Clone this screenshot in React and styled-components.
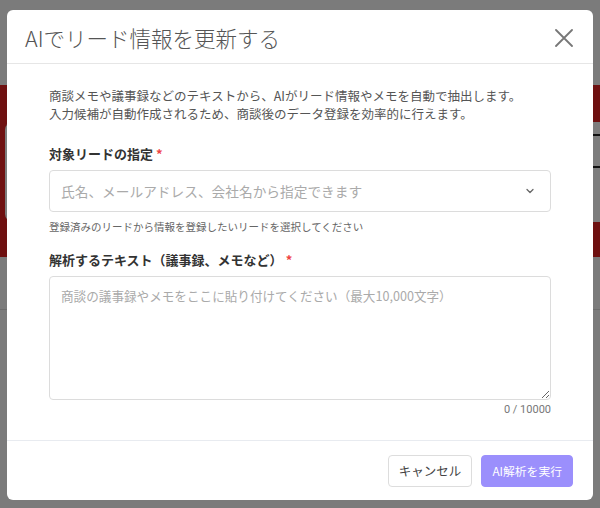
import React from 'react';
import styled, { createGlobalStyle } from 'styled-components';

const GlobalStyle = createGlobalStyle`
  html, body {
    margin: 0;
    padding: 0;
    width: 600px;
    height: 508px;
    overflow: hidden;
    font-family: 'Noto Sans CJK JP', 'Noto Sans', sans-serif;
  }
  * {
    box-sizing: border-box;
  }
`;

const Page = styled.div`
  position: relative;
  width: 600px;
  height: 508px;
  background: #f6f6f6;
  display: flex;
  flex-direction: column;
`;

const PageTop = styled.div`
  height: 85px;
  flex-shrink: 0;
`;

const Hero = styled.div`
  height: 172px;
  flex-shrink: 0;
  background: #dc2121;
  padding: 37px 0 0 5px;
`;

const HeroCard = styled.div`
  height: 100px;
  background: #fafafa;
  border-radius: 8px 0 0 8px;
  display: flex;
  justify-content: flex-end;
  align-items: flex-start;
  padding-top: 12px;
`;

const CardIcon = styled.div`
  width: 12px;
  height: 34px;
  border: 2px solid #222;
  border-right: none;
  border-radius: 4px 0 0 4px;
`;

const Divider = styled.div`
  margin-top: 52px;
  height: 1px;
  background: #d8d8d8;
`;

const Overlay = styled.div`
  position: absolute;
  inset: 0;
  background: rgba(0, 0, 0, 0.5);
  display: flex;
  align-items: flex-start;
  justify-content: center;
  padding-top: 10px;
`;

const Modal = styled.div`
  width: 586px;
  height: 490px;
  background: #fff;
  border-radius: 6px;
  display: flex;
  flex-direction: column;
  overflow: hidden;
`;

const Header = styled.div`
  height: 54px;
  flex-shrink: 0;
  display: flex;
  align-items: center;
  justify-content: space-between;
  padding: 2px 20px 0 18px;
  border-bottom: 1px solid #e6e6e6;
`;

const Title = styled.h2`
  margin: 0;
  font-size: 21.5px;
  font-weight: 300;
  color: #555;
`;

const CloseButton = styled.button`
  background: none;
  border: none;
  padding: 0;
  width: 18px;
  height: 18px;
  display: flex;
  align-items: center;
  justify-content: center;
  cursor: pointer;
`;

const Body = styled.div`
  flex: 1;
  padding: 23px 42px 0 42px;
  display: flex;
  flex-direction: column;
`;

const Description = styled.p`
  margin: 0 0 22px 0;
  font-size: 12.5px;
  line-height: 18px;
  color: #555;
`;

const Label = styled.label`
  display: block;
  font-size: 13px;
  font-weight: 700;
  color: #333;
  line-height: 18px;
  margin-bottom: 7px;
`;

const Required = styled.span`
  color: #ef4444;
  margin-left: 3px;
`;

const SelectBox = styled.div`
  height: 42px;
  border: 1px solid #dcdcdc;
  border-radius: 4px;
  display: flex;
  align-items: center;
  justify-content: space-between;
  padding: 0 14px 0 11px;
  font-size: 13.7px;
  color: #aaa;
`;

const Help = styled.div`
  font-size: 10.5px;
  color: #666;
  margin-top: 7px;
  margin-bottom: 17px;
`;

const TextArea = styled.textarea`
  display: block;
  width: 100%;
  height: 124px;
  border: 1px solid #dcdcdc;
  border-radius: 4px;
  padding: 9px 11px;
  font-family: 'Noto Sans CJK JP', 'Noto Sans', sans-serif;
  font-size: 12.6px;
  color: #333;
  resize: vertical;
  outline: none;

  &::placeholder {
    color: #aaa;
  }
`;

const Counter = styled.div`
  text-align: right;
  font-family: Roboto, 'Noto Sans', sans-serif;
  font-size: 11px;
  color: #777;
  margin-top: 3px;
`;

const Footer = styled.div`
  height: 60px;
  flex-shrink: 0;
  border-top: 1px solid #e8ebf0;
  display: flex;
  align-items: center;
  justify-content: flex-end;
  gap: 9px;
  padding: 0 20px 0 0;
`;

const Button = styled.button`
  height: 32px;
  padding: 0 10px;
  border-radius: 4px;
  border: 1px solid ${({ primary }) => (primary ? '#9b8ffc' : '#dddddd')};
  background: ${({ primary }) => (primary ? '#9b8ffc' : '#fff')};
  color: ${({ primary }) => (primary ? '#fff' : '#444')};
  font-family: 'Noto Sans CJK JP', 'Noto Sans', sans-serif;
  font-size: ${({ primary }) => (primary ? '11.8px' : '12.5px')};
  cursor: pointer;
`;

const ChevronDown = () => (
  <svg width="12" height="12" viewBox="0 0 24 24" fill="none" stroke="#666" strokeWidth="2.5" strokeLinecap="round" strokeLinejoin="round">
    <path d="M6 9l6 6 6-6" />
  </svg>
);

const CloseIcon = () => (
  <svg width="18" height="18" viewBox="0 0 18 18" fill="none" stroke="#777" strokeWidth="1.8" strokeLinecap="round">
    <path d="M1 1l16 16M17 1L1 17" />
  </svg>
);

const App = () => (
  <>
    <GlobalStyle />
    <Page>
      <PageTop />
      <Hero>
        <HeroCard>
          <CardIcon />
        </HeroCard>
      </Hero>
      <Divider />
      <Overlay>
        <Modal>
          <Header>
            <Title>AIでリード情報を更新する</Title>
            <CloseButton aria-label="閉じる">
              <CloseIcon />
            </CloseButton>
          </Header>
          <Body>
            <Description>
              商談メモや議事録などのテキストから、AIがリード情報やメモを自動で抽出します。
              <br />
              入力候補が自動作成されるため、商談後のデータ登録を効率的に行えます。
            </Description>
            <Label>
              対象リードの指定<Required>*</Required>
            </Label>
            <SelectBox>
              <span>氏名、メールアドレス、会社名から指定できます</span>
              <ChevronDown />
            </SelectBox>
            <Help>登録済みのリードから情報を登録したいリードを選択してください</Help>
            <Label>
              解析するテキスト（議事録、メモなど）<Required>*</Required>
            </Label>
            <TextArea placeholder="商談の議事録やメモをここに貼り付けてください（最大10,000文字）" />
            <Counter>0 / 10000</Counter>
          </Body>
          <Footer>
            <Button>キャンセル</Button>
            <Button primary>AI解析を実行</Button>
          </Footer>
        </Modal>
      </Overlay>
    </Page>
  </>
);

export default App;
